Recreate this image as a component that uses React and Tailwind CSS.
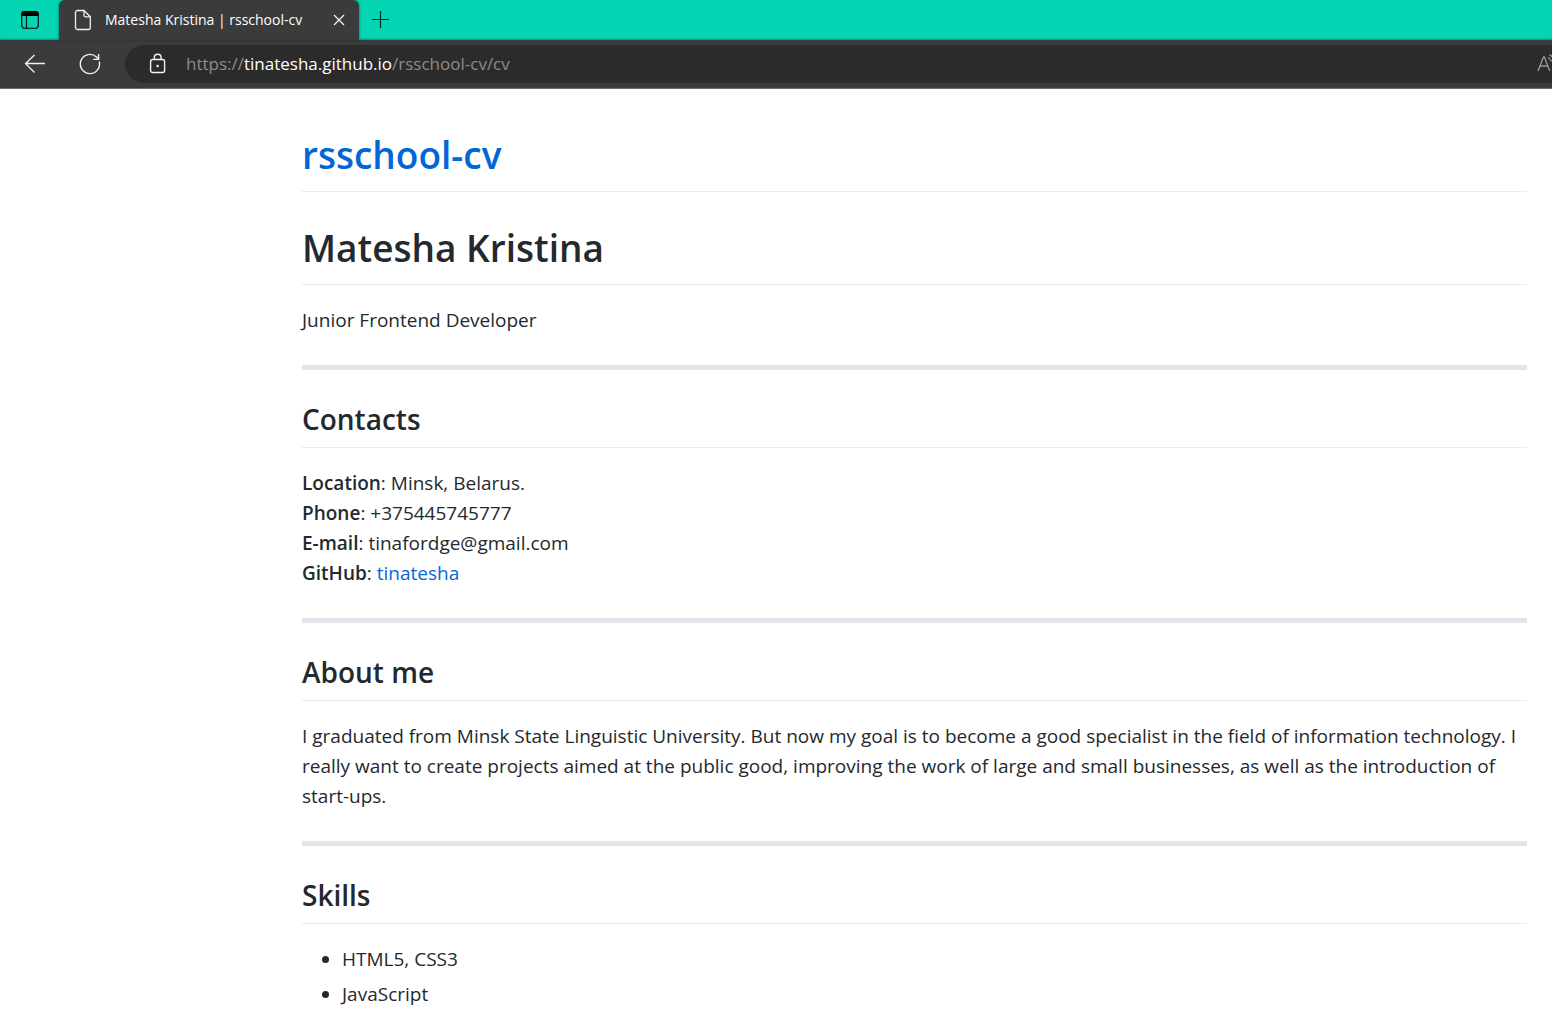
import React from "react";

function TabActionsIcon() {
  return (
    <svg width="20" height="20" viewBox="0 0 20 20" fill="none" stroke="#05231d" strokeWidth="1.3">
      <rect x="1.7" y="1.7" width="16.6" height="16.6" rx="3" />
      <path d="M1.2 6V4a3 3 0 0 1 3-3h11.6a3 3 0 0 1 3 3v2z" fill="#000" stroke="none" />
      <path d="M6.5 6v12" />
    </svg>
  );
}

function PageIcon() {
  return (
    <svg width="18" height="22" viewBox="0 0 18 22" fill="none" stroke="#f2f2f2" strokeWidth="1.3" strokeLinejoin="round">
      <path d="M3.5 1.5H10L16.3 7.8V18.5a2 2 0 0 1-2 2H3.5a2 2 0 0 1-2-2v-15a2 2 0 0 1 2-2z" />
      <path d="M10 1.5V6.3a1.5 1.5 0 0 0 1.5 1.5h4.8" />
    </svg>
  );
}

function CloseIcon() {
  return (
    <svg width="12" height="12" viewBox="0 0 12 12" stroke="#f2f2f2" strokeWidth="1.3">
      <path d="M1 1l10 10M11 1L1 11" />
    </svg>
  );
}

function PlusIcon() {
  return (
    <svg width="18" height="18" viewBox="0 0 18 18" stroke="#05231d" strokeWidth="1.2">
      <path d="M8.5 0v17M0 8.5h17" />
    </svg>
  );
}

function BackIcon() {
  return (
    <svg width="22" height="20" viewBox="0 0 22 20" fill="none" stroke="#f2f2f2" strokeWidth="1.3">
      <path d="M21 9.5H1.5M10.5 1L1.5 9.5l9 9" />
    </svg>
  );
}

function ReloadIcon() {
  return (
    <svg width="22" height="22" viewBox="0 0 22 22" fill="none" stroke="#f2f2f2" strokeWidth="1.4">
      <path d="M20.2 8.5A9.6 9.6 0 1 1 17.5 4L19.4 6.2" />
      <path d="M19.6 1v5.4h-5.4" />
    </svg>
  );
}

function LockIcon() {
  return (
    <svg width="18" height="22" viewBox="0 0 18 22" fill="none" stroke="#f2f2f2" strokeWidth="1.4">
      <rect x="1.6" y="6.5" width="14" height="13" rx="2" />
      <path d="M5.3 6.5V4.7a3.4 3.4 0 0 1 6.8 0v1.8" />
      <circle cx="8.6" cy="13" r="1.3" fill="#f2f2f2" stroke="none" />
    </svg>
  );
}

function ReadAloudIcon() {
  return (
    <svg width="15" height="20" viewBox="0 0 15 20" fill="none" stroke="#9a9a9a" strokeWidth="1.3">
      <path d="M1 17L6.5 3h.8L12.8 17M3 12h8" />
      <path d="M11 3.5q2.500 1.200 3.500 4M12.5 .5q2.500 1.500 4 5" />
    </svg>
  );
}

function BrowserChrome() {
  return (
    <header className="text-white">
      <div className="flex h-10 items-stretch bg-[#04d6b4] shadow-[inset_0_-2px_2px_-1px_rgba(0,80,65,0.5)]">
        <button aria-label="Tab actions" className="flex w-[59px] items-center justify-center">
          <TabActionsIcon />
        </button>
        <div className="flex w-[300px] items-center rounded-t-md bg-[#3b3b3b] pr-3.5 pl-[15px] shadow-[0_0_3px_rgba(0,60,50,0.7)]">
          <PageIcon />
          <span className="ml-[13px] flex-1 text-[14px] leading-5 whitespace-nowrap">Matesha Kristina | rsschool-cv</span>
          <button aria-label="Close tab">
            <CloseIcon />
          </button>
        </div>
        <button aria-label="New tab" className="flex w-11 items-center justify-center">
          <PlusIcon />
        </button>
      </div>
      <div className="flex h-[49px] items-center border-b border-[#6a6a6a] bg-[#3b3b3b]">
        <button aria-label="Back" className="ml-6">
          <BackIcon />
        </button>
        <button aria-label="Reload" className="ml-[33px]">
          <ReloadIcon />
        </button>
        <div className="ml-6 flex h-[38px] min-w-0 flex-1 items-center rounded-l-full bg-[#2b2b2b] pl-6">
          <LockIcon />
          <a href="https://tinatesha.github.io/rsschool-cv/cv" className="ml-[19px] flex-1 text-[17px] leading-6 text-[#8b8b8b]">
            https://<span className="text-white">tinatesha.github.io</span>/rsschool-cv/cv
          </a>
          <button aria-label="Read aloud">
            <ReadAloudIcon />
          </button>
        </div>
      </div>
    </header>
  );
}

function Title({ children }) {
  return (
    <h1 className="mb-5 border-b border-[#eaecef] pb-2.5 text-[37px] leading-[52px] font-semibold">{children}</h1>
  );
}

function Section({ title, children }) {
  return (
    <section>
      <hr className="my-[30px] h-[5px] border-0 bg-[#e1e4e8]" />
      <h2 className="mb-5 border-b border-[#eaecef] pb-[9px] text-[28px] leading-[38px] font-semibold">{title}</h2>
      {children}
    </section>
  );
}

export default function App() {
  return (
    <div className="h-screen overflow-hidden bg-white font-['Open_Sans','Noto_Sans',sans-serif]">
      <BrowserChrome />
      <main className="pt-10 pr-[25px] pl-[302px] text-[19px] leading-[30px] text-[#24292e]">
        <Title>
          <a href="#top" className="text-[#0366d6]">rsschool-cv</a>
        </Title>
        <div className="mt-[30px]">
          <Title>Matesha Kristina</Title>
        </div>
        <p>Junior Frontend Developer</p>
        <Section title="Contacts">
          <p>
            <strong className="font-semibold">Location</strong>: Minsk, Belarus.
            <br />
            <strong className="font-semibold">Phone</strong>: +375445745777
            <br />
            <strong className="font-semibold">E-mail</strong>: tinafordge@gmail.com
            <br />
            <strong className="font-semibold">GitHub</strong>:{" "}
            <a href="https://github.com/tinatesha" className="text-[#0366d6]">tinatesha</a>
          </p>
        </Section>
        <Section title="About me">
          <p>
            I graduated from Minsk State Linguistic University. But now my goal is to become a good specialist in the
            field of information technology. I really want to create projects aimed at the public good, improving the
            work of large and small businesses, as well as the introduction of start-ups.
          </p>
        </Section>
        <Section title="Skills">
          <ul className="list-disc space-y-[5px] pl-10">
            <li>HTML5, CSS3</li>
            <li>JavaScript</li>
          </ul>
        </Section>
      </main>
    </div>
  );
}
